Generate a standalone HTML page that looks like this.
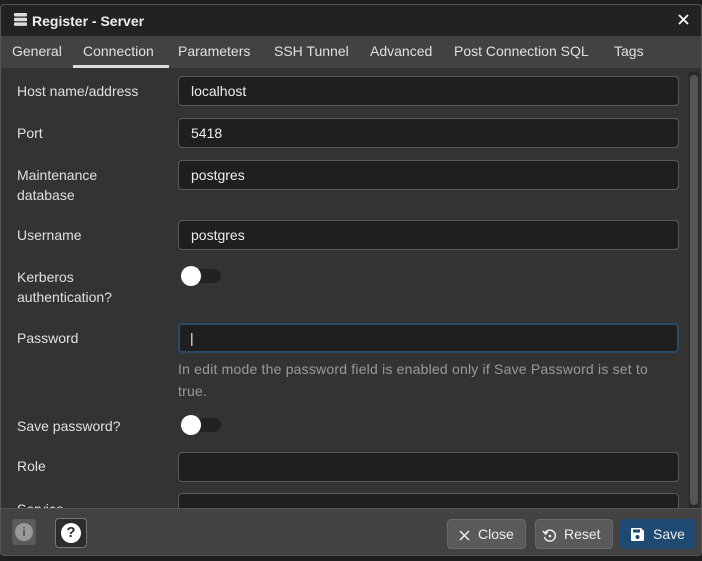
<!DOCTYPE html>
<html><head><style>
*{box-sizing:border-box;margin:0;padding:0}
body{width:702px;height:561px;background:#1e1e1e;font-family:"Liberation Sans",sans-serif;overflow:hidden;position:relative;color:#e0e0e0}
.dlg{position:absolute;left:0;top:4px;width:702px;height:552px;border:1px solid #555;border-radius:4px;background:#333;overflow:hidden}
.title{position:absolute;left:0;top:0;width:100%;height:31px;background:#222;font-weight:bold;font-size:14px;color:#eee;padding:8px 0 0 31px}
.tabs{position:absolute;left:0;top:31px;width:100%;height:32px;background:#424242;font-size:14px;color:#e0e0e0}
.tabs span{position:absolute;top:7px}
.ul{position:absolute;left:72px;top:29px;width:96px;height:3px;background:#ddd}
.lbl{position:absolute;left:16px;font-size:14px;color:#e0e0e0;line-height:20px}
.inp{position:absolute;left:177px;width:501px;height:30px;background:#1f1f1f;border:1px solid #5a5a5a;border-radius:4px;font-size:14px;color:#eee;padding:6px 12px}
.tog{position:absolute;left:180px;width:40px;height:14px;border-radius:7px;background:#222}
.tog:before{content:"";position:absolute;left:0;top:-3px;width:20px;height:20px;border-radius:50%;background:#fff}
.foot{position:absolute;left:0;top:503px;width:100%;height:49px;background:#424242;border-top:1px solid #555}
.btn{position:absolute;top:10px;height:30px;border-radius:4px;background:#5a5a5a;border:1px solid #6a6a6a;color:#eee;font-size:14px;padding:6px 0 0 0}
</style></head><body>
<div class="dlg">
<div class="title"><svg style="position:absolute;left:13px;top:8px" width="13" height="13" viewBox="0 0 13 13"><rect x="0" y="0" width="13" height="3.5" rx="1" fill="#ddd"/><rect x="0" y="4.7" width="13" height="3.5" rx="1" fill="#ddd"/><rect x="0" y="9.4" width="13" height="3.5" rx="1" fill="#ddd"/></svg>Register - Server
<svg style="position:absolute;left:677px;top:9px" width="11" height="11" viewBox="0 0 11 11"><path d="M1 1L10 10M10 1L1 10" stroke="#fff" stroke-width="1.8"/></svg></div>
<div class="tabs"><span style="left:11px">General</span><span style="left:82px">Connection</span><span style="left:177px">Parameters</span><span style="left:273px">SSH Tunnel</span><span style="left:369px">Advanced</span><span style="left:453px">Post Connection SQL</span><span style="left:613px">Tags</span><div class="ul"></div></div>
<div style="position:absolute;left:688px;top:67px;width:10px;height:437px;background:#2a2a2a"></div>
<div style="position:absolute;left:689px;top:70px;width:8px;height:430px;border-radius:4px;background:#555"></div>
<div class="lbl" style="top:76px">Host name/address</div><div class="inp" style="top:71px">localhost</div>
<div class="lbl" style="top:118px">Port</div><div class="inp" style="top:113px">5418</div>
<div class="lbl" style="top:160px">Maintenance<br>database</div><div class="inp" style="top:155px">postgres</div>
<div class="lbl" style="top:220px">Username</div><div class="inp" style="top:215px">postgres</div>
<div class="lbl" style="top:262px">Kerberos<br>authentication?</div><div class="tog" style="top:264px"></div>
<div class="lbl" style="top:323px">Password</div><div class="inp" style="top:318px;border:2px solid #2a4a66;padding:5px 10px">|</div>
<div style="position:absolute;left:177px;top:353px;width:495px;font-size:14px;line-height:22px;color:#9a9a9a;letter-spacing:0.2px">In edit mode the password field is enabled only if Save Password is set to true.</div>
<div class="lbl" style="top:411px">Save password?</div><div class="tog" style="top:413px"></div>
<div class="lbl" style="top:451px">Role</div><div class="inp" style="top:447px"></div>
<div class="lbl" style="top:494px">Service</div><div class="inp" style="top:488px"></div>
<div class="foot">
<div style="position:absolute;left:11px;top:10px;width:24px;height:26px;border-radius:4px;background:#5a5a5a"><div style="position:absolute;left:3px;top:4px;width:18px;height:18px;border-radius:50%;background:#999;color:#555;font-size:12px;font-weight:bold;text-align:center;line-height:18px">i</div></div>
<div style="position:absolute;left:54px;top:9px;width:32px;height:30px;border-radius:4px;background:#2c2c2c;border:1px solid #777"><div style="position:absolute;left:5px;top:4px;width:20px;height:20px;border-radius:50%;background:#fff;color:#2c2c2c;font-size:15px;font-weight:bold;text-align:center;line-height:20px">?</div></div>
<div class="btn" style="left:446px;width:79px"><svg style="position:absolute;left:11px;top:10px" width="11" height="11" viewBox="0 0 11 11"><path d="M1 1L10 10M10 1L1 10" stroke="#eee" stroke-width="1.5"/></svg><span style="position:absolute;left:30px">Close</span></div>
<div class="btn" style="left:534px;width:78px"><svg style="position:absolute;left:6px;top:8px" width="15" height="15" viewBox="0 0 15 15"><path d="M3 5A5.5 5.5 0 1 1 2.5 9" fill="none" stroke="#eee" stroke-width="1.5"/><path d="M1 3L3.5 6L6 3.5" fill="none" stroke="#eee" stroke-width="1.5"/><circle cx="8" cy="8" r="1.3" fill="#eee"/></svg><span style="position:absolute;left:28px">Reset</span></div>
<div class="btn" style="left:619px;width:75px;background:#1f4b73;border-color:#1f4b73"><svg style="position:absolute;left:9px;top:7px" width="15" height="15" viewBox="0 0 15 15"><path d="M1 2a1 1 0 0 1 1-1h9l3 3v9a1 1 0 0 1-1 1H2a1 1 0 0 1-1-1z" fill="#fff"/><rect x="3" y="2.5" width="7" height="3" fill="#1f4b73"/><circle cx="7.5" cy="10" r="2" fill="#1f4b73"/></svg><span style="position:absolute;left:32px">Save</span></div>
</div>
</div>
</body></html>
